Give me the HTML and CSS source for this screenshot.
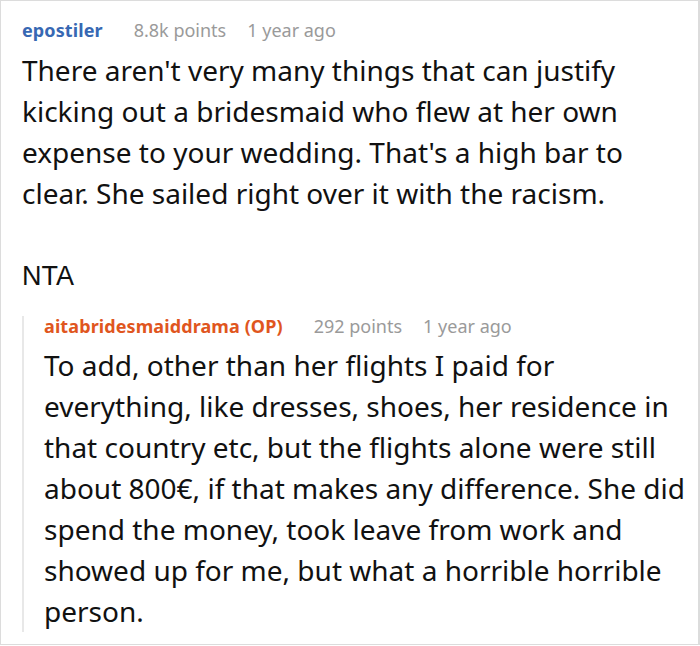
FILE: index.html
```html
<!DOCTYPE html>
<html>
<head>
<meta charset="utf-8">
<link rel="stylesheet" href="styles.css">
</head>
<body>
<div class="comment">
  <div class="meta">
    <span class="author">epostiler</span>
    <span class="info points">8.8k points</span>
    <span class="info">1 year ago</span>
  </div>
  <div class="text">
    <p>There aren't very many things that can justify kicking out a bridesmaid who flew at her own expense to your wedding. That's a high bar to clear. She sailed right over it with the racism.</p>
    <p class="nta">NTA</p>
  </div>
  <div class="reply">
    <div class="meta">
      <span class="author op">aitabridesmaiddrama (OP)</span>
      <span class="info points">292 points</span>
      <span class="info">1 year ago</span>
    </div>
    <div class="text reply-text">
      <p>To add, other than her flights I paid for everything, like dresses, shoes, her residence in that country etc, but the flights alone were still about 800€, if that makes any difference. She did spend the money, took leave from work and showed up for me, but what a horrible horrible person.</p>
    </div>
  </div>
</div>
</body>
</html>
```
FILE: styles.css
```css
html, body {
  margin: 0;
  padding: 0;
  background: #fff;
}
.comment {
  box-sizing: border-box;
  width: 700px;
  height: 645px;
  border: 1px solid #dcdcdc;
  border-right-width: 2px;
  padding: 17px 10px 0 21px;
  font-family: "Noto Sans", sans-serif;
  color: #111;
}
.meta {
  display: flex;
  font-size: 18px;
  line-height: 24px;
  height: 24px;
}
.author {
  font-weight: bold;
  color: #3768b3;
  margin-right: 31px;
  letter-spacing: 0.1px;
}
.author.op {
  color: #e0561e;
}
.info {
  color: #9a9a9a;
}
.points {
  margin-right: 21px;
}
.text {
  margin-top: 8px;
}
.text p {
  margin: 0;
  font-size: 28px;
  line-height: 41px;
}
.text .nta {
  margin-top: 42px;
  font-family: "Liberation Sans", Arial, sans-serif;
  font-size: 27px;
}
.reply {
  margin-top: 19px;
  border-left: 2px solid #e8e8e8;
  padding-left: 20px;
}
.reply .meta {
  position: relative;
  top: -2px;
}
.reply-text {
  margin-top: 5px;
}
```
